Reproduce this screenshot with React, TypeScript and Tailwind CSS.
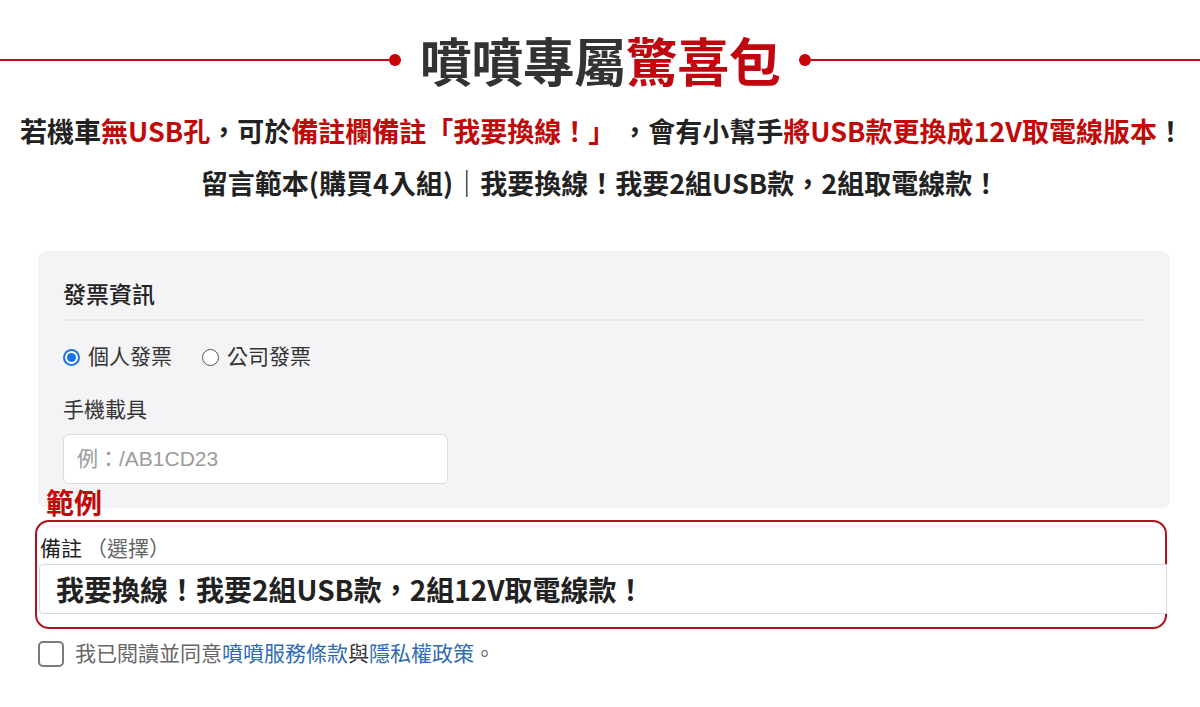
import React from "react";

const CJK = { fontFamily: '"Noto Sans CJK TC", "Noto Sans", sans-serif' };
const FORM = { fontFamily: '"Liberation Sans", "Noto Sans CJK TC", sans-serif' };

export default function App() {
  return (
    <div className="w-[1200px] h-[707px] bg-white overflow-hidden text-[#2b2b2b]" style={CJK}>
      {/* Title */}
      <div className="mt-[34px] h-[52px] flex items-center">
        <div className="flex-1 flex items-center">
          <div className="flex-1 h-[2px] bg-[#c0101a]" />
          <div className="w-[12px] h-[12px] rounded-full bg-[#c8000a]" />
        </div>
        <div className="mx-[19px] text-[52px] leading-[52px] font-bold tracking-[-0.5px] whitespace-nowrap">
          <span className="text-[#333333]">噴噴專屬</span>
          <span className="text-[#c0070f]">驚喜包</span>
        </div>
        <div className="flex-1 flex items-center">
          <div className="w-[12px] h-[12px] rounded-full bg-[#c8000a]" />
          <div className="flex-1 h-[2px] bg-[#c0101a]" />
        </div>
      </div>

      {/* Notes */}
      <div className="mt-[19px] text-center font-bold text-[27px] leading-[52px] text-[#222]">
        <div className="whitespace-nowrap pl-[4px]">
          若機車<span className="text-[#c00a0a]">無USB孔</span>，可於
          <span className="text-[#c00a0a]">備註欄備註「我要換線！」</span> ，會有小幫手
          <span className="text-[#c00a0a]">將USB款更換成12V取電線版本</span>！
        </div>
        <div className="whitespace-nowrap">留言範本(購買4入組)｜我要換線！我要2組USB款，2組取電線款！</div>
      </div>

      {/* Invoice box */}
      <div className="mt-[42px] ml-[38px] w-[1132px] bg-[#f4f4f6] rounded-[8px] px-[25px] pt-[29px] pb-[24px]" style={FORM}>
        <div className="text-[23px] leading-[30px] text-[#222] font-medium">發票資訊</div>
        <div className="mt-[9px] h-[2px] bg-[#e6e6e9]" />
        <div className="mt-[22px] flex items-center h-[28px] text-[21px] text-[#333]">
          <span className="w-[17px] h-[17px] rounded-full bg-[#1a73e8] flex items-center justify-center">
            <span className="w-[13px] h-[13px] rounded-full bg-white flex items-center justify-center">
              <span className="w-[9px] h-[9px] rounded-full bg-[#1a73e8]" />
            </span>
          </span>
          <span className="ml-[8px]">個人發票</span>
          <span className="ml-[30px] w-[17px] h-[17px] rounded-full border border-[#555] bg-white" />
          <span className="ml-[8px]">公司發票</span>
        </div>
        <div className="mt-[24px] text-[21px] leading-[30px] text-[#333]">手機載具</div>
        <div className="mt-[9px] w-[385px] h-[50px] bg-white border border-[#dcdcdf] rounded-[6px] flex items-center pl-[13px] text-[21px] text-[#9b9b9b]">
          例：/AB1CD23
        </div>
      </div>

      {/* Example */}
      <div className="mt-[-22px] ml-[46px] text-[28px] leading-[32px] font-bold text-[#c00a0a] relative">範例</div>
      <div className="mt-[2px] ml-[35px] w-[1132px] h-[109px] border-2 border-[#b3121a] rounded-[14px] pt-[14px]" style={FORM}>
        <div className="ml-[3px] text-[21px] leading-[26px] text-[#222]">
          備註<span className="ml-[4px] text-[#666]">（選擇）</span>
        </div>
        <div className="mt-[2px] ml-[2px] mr-[-2px] h-[50px] bg-white border border-[#d5d8de] rounded-l-[4px] flex items-center pl-[16px] text-[28px] font-bold text-[#222]" style={CJK}>
          我要換線！我要2組USB款，2組12V取電線款！
        </div>
      </div>

      {/* Agreement */}
      <div className="mt-[9px] ml-[38px] flex items-center text-[21px]" style={FORM}>
        <span className="w-[26px] h-[26px] rounded-[5px] border-2 border-[#7a7a7a] bg-white" />
        <span className="ml-[11px] text-[#666]">我已閱讀並同意</span>
        <span className="text-[#2e6bb3]">噴噴服務條款</span>
        <span className="text-[#333]">與</span>
        <span className="text-[#2e6bb3]">隱私權政策</span>
        <span className="text-[#666]">。</span>
      </div>
    </div>
  );
}
